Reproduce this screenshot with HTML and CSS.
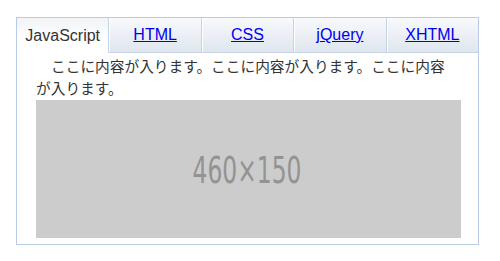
FILE: index.html
```html
<!DOCTYPE html>
<html lang="ja">

<head>
    <meta charset="UTF-8">
    <meta name="viewport" content="width=device-width, initial-scale=1.0">
    <title>Tabs</title>
    <link rel="stylesheet" href="styles.css">
</head>

<body>
    <div class="tab-box">
        <ul class="tabs">
            <li class="tab active"><span>JavaScript</span></li>
            <li class="tab"><a href="#html">HTML</a></li>
            <li class="tab"><a href="#css">CSS</a></li>
            <li class="tab"><a href="#jquery">jQuery</a></li>
            <li class="tab"><a href="#xhtml">XHTML</a></li>
        </ul>

        <div class="tab-panel">
            <p class="panel-text">ここに内容が入ります。ここに内容が入ります。ここに内容が入ります。</p>
            <div class="placeholder">
                <svg width="425" height="138" viewBox="0 0 425 138">
                    <text class="placeholder-label" x="211" y="83" text-anchor="middle" textLength="109" lengthAdjust="spacingAndGlyphs">460×150</text>
                </svg>
            </div>
        </div>
    </div>
</body>

</html>
```

FILE: styles.css
```css
      body {
          margin: 0;
          background: #fff;
          font-family: "Liberation Sans", Arial, sans-serif;
      }

      .tab-box {
          width: 461px;
          margin: 17px 0 0 16px;
          border: 1px solid #b9cbe5;
      }

      .tabs {
          display: flex;
          margin: 0;
          padding: 0;
          list-style: none;
      }

      .tab {
          flex: 1;
          height: 34px;
          display: flex;
          align-items: center;
          justify-content: center;
          font-size: 16px;
          border-right: 1px solid #c6d3e4;
          border-bottom: 1px solid #c6d3e4;
          background: linear-gradient(#f8f9fb, #dfe6ef);
          box-shadow: inset 1px 0 0 #fff;
      }

      .tab:last-child {
          border-right: none;
      }

      .tab a {
          color: #0000ee;
          text-decoration: underline;
      }

      .tab.active {
          height: 35px;
          border-bottom: none;
          background: linear-gradient(#f1f3f5, #fff 60%);
          box-shadow: none;
          color: #333;
      }

      .tab-panel {
          padding: 2px 17px 6px 19px;
      }

      .panel-text {
          width: 420px;
          margin: 0 0 2px;
          font-family: "Noto Sans CJK JP", sans-serif;
          font-size: 14.7px;
          line-height: 21.5px;
          text-indent: 15px;
          text-spacing-trim: space-all;
          color: #333;
      }

      .placeholder {
          width: 425px;
          height: 138px;
          background: #cccccc;
      }

      .placeholder svg {
          display: block;
      }

      .placeholder-label {
          font-family: "Liberation Sans Narrow", "DejaVu Sans Condensed", "Liberation Sans", sans-serif;
          font-size: 38px;
          fill: #939393;
      }
```
